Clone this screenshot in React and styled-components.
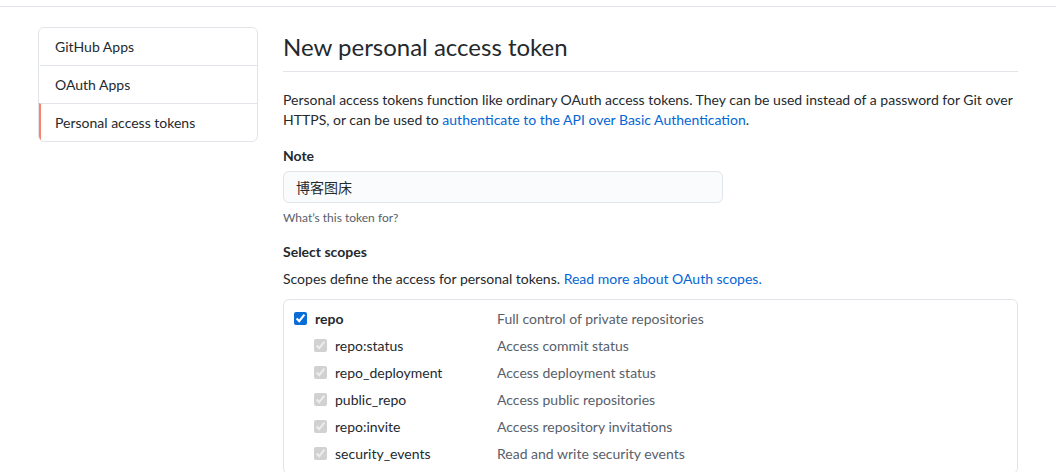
import React from "react";
import styled, { createGlobalStyle } from "styled-components";

const Global = createGlobalStyle`
  html, body { margin: 0; padding: 0; background: #fff; }
  body {
    font-family: Lato, "Liberation Sans", Arial, "Noto Sans CJK SC", sans-serif;
    font-size: 14px;
    color: #24292e;
  }
  * { box-sizing: border-box; }
`;

const TopBar = styled.div`
  height: 7px;
  border-bottom: 1px solid #e1e4e8;
`;

const Layout = styled.div`
  display: flex;
  align-items: flex-start;
  gap: 25px;
  padding: 20px 0 0 38px;
`;

const SideNav = styled.nav`
  width: 220px;
  flex: none;
  border: 1px solid #e1e4e8;
  border-radius: 6px;
  overflow: hidden;
`;

const NavItem = styled.a`
  display: block;
  padding: 8px 16px 8px 14px;
  line-height: 21px;
  color: #24292e;
  text-decoration: none;
  border-left: 2px solid ${(p) => (p.$active ? "#f9826c" : "transparent")};
  & + & { border-top: 1px solid #e1e4e8; }
`;

const Main = styled.main`
  width: 735px;
  flex: none;
`;

const Heading = styled.h2`
  margin: 0;
  padding: 5px 0 9px;
  font-size: 24px;
  line-height: 30px;
  font-weight: 400;
  border-bottom: 1px solid #e1e4e8;
`;

const Lead = styled.p`
  margin: 18px 0 0;
  line-height: 20px;
`;

const Link = styled.a`
  color: #0366d6;
  text-decoration: none;
`;

const Label = styled.div`
  font-weight: bold;
  line-height: 21px;
  margin-top: ${(p) => p.$top || 0}px;
`;

const Input = styled.input`
  display: block;
  margin-top: 5px;
  width: 440px;
  height: 32px;
  padding: 5px 12px;
  font: inherit;
  color: #24292e;
  background: #fafbfc;
  border: 1px solid #e1e4e8;
  border-radius: 6px;
  outline: none;
`;

const Hint = styled.p`
  margin: 6px 0 0;
  font-size: 12px;
  line-height: 18px;
  color: #586069;
`;

const Desc = styled.p`
  margin: 6px 0 0;
  line-height: 21px;
`;

const ScopeBox = styled.div`
  margin-top: 10px;
  border: 1px solid #e1e4e8;
  border-radius: 6px;
  padding: 5px 0 6px 10px;
`;

const ScopeRow = styled.label`
  display: grid;
  grid-template-columns: ${(p) => (p.$sub ? "20px 21px 162px" : "0 21px 182px")} 1fr;
  align-items: center;
  height: 27px;
`;

const Check = styled.input`
  grid-column: 2;
  margin: 0;
  width: 13px;
  height: 13px;
  accent-color: #0a6cd6;
`;

const ScopeName = styled.span`
  grid-column: 3;
  font-weight: ${(p) => (p.$bold ? "bold" : "normal")};
`;

const ScopeDesc = styled.span`
  grid-column: 4;
  color: #586069;
`;

const scopes = [
  { name: "repo", desc: "Full control of private repositories", top: true },
  { name: "repo:status", desc: "Access commit status" },
  { name: "repo_deployment", desc: "Access deployment status" },
  { name: "public_repo", desc: "Access public repositories" },
  { name: "repo:invite", desc: "Access repository invitations" },
  { name: "security_events", desc: "Read and write security events" },
];

export default function App() {
  return (
    <>
      <Global />
      <TopBar />
      <Layout>
        <SideNav>
          <NavItem href="#">GitHub Apps</NavItem>
          <NavItem href="#">OAuth Apps</NavItem>
          <NavItem href="#" $active>Personal access tokens</NavItem>
        </SideNav>
        <Main>
          <Heading>New personal access token</Heading>
          <Lead>
            Personal access tokens function like ordinary OAuth access tokens. They can be used instead of a password for Git over
            <br />
            HTTPS, or can be used to <Link href="#">authenticate to the API over Basic Authentication</Link>.
          </Lead>
          <Label $top={15}>Note</Label>
          <Input defaultValue="博客图床" readOnly />
          <Hint>What’s this token for?</Hint>
          <Label $top={14}>Select scopes</Label>
          <Desc>
            Scopes define the access for personal tokens. <Link href="#">Read more about OAuth scopes.</Link>
          </Desc>
          <ScopeBox>
            {scopes.map((s) => (
              <ScopeRow key={s.name} $sub={!s.top}>
                {s.top ? (
                  <Check type="checkbox" defaultChecked />
                ) : (
                  <Check type="checkbox" defaultChecked disabled />
                )}
                <ScopeName $bold={s.top}>{s.name}</ScopeName>
                <ScopeDesc>{s.desc}</ScopeDesc>
              </ScopeRow>
            ))}
          </ScopeBox>
        </Main>
      </Layout>
    </>
  );
}
